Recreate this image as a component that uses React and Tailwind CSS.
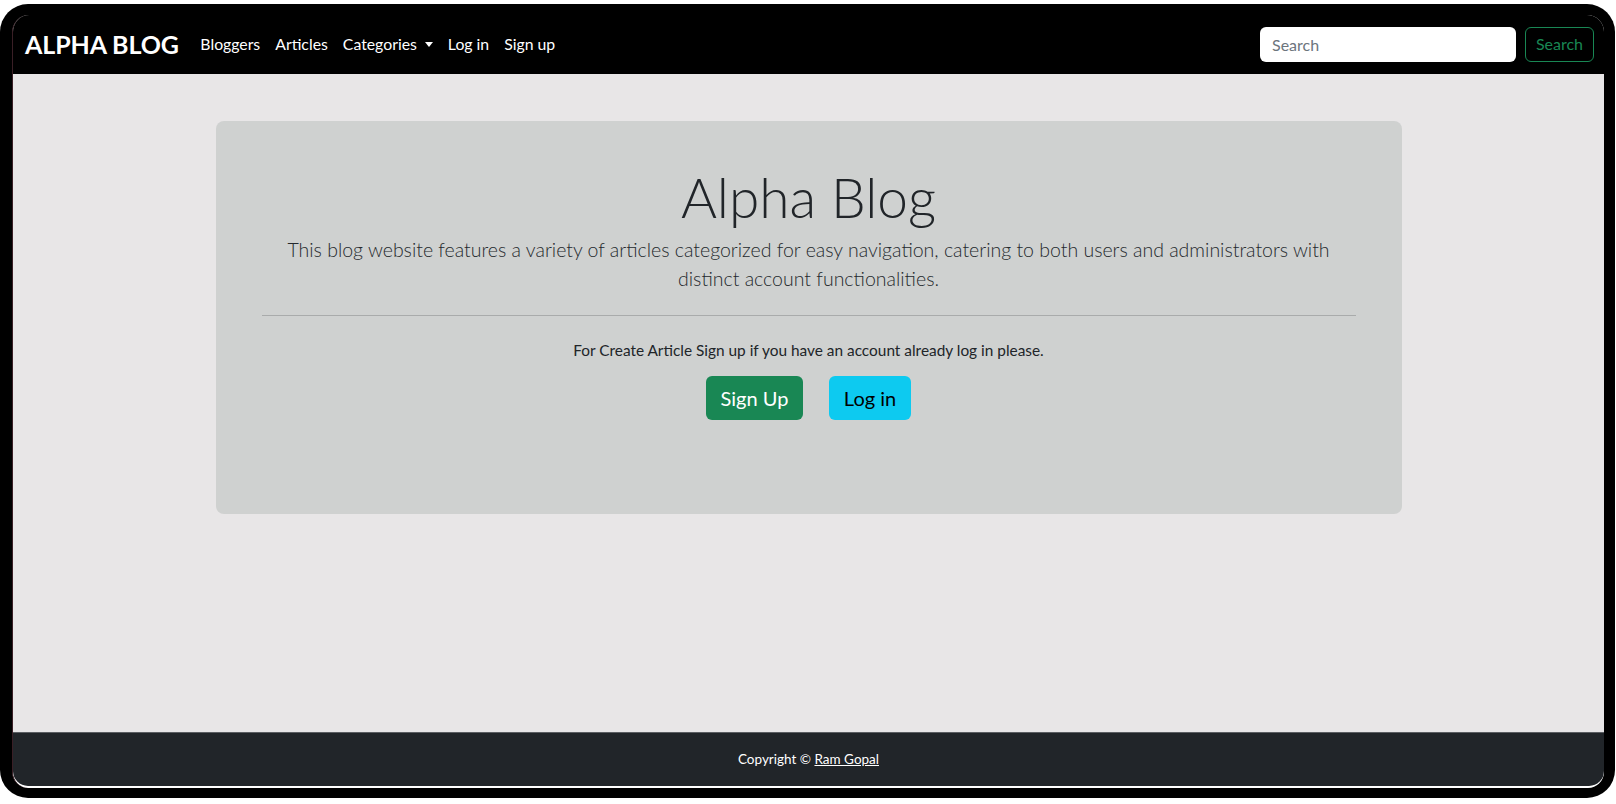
export default function App() {
  const font = { fontFamily: 'Lato, "Open Sans", sans-serif' };
  return (
    <div className="w-[1616px] h-[804px] bg-white overflow-hidden" style={font}>
      <div className="mt-[4px] w-[1615px] h-[794px] bg-black rounded-[28px] pl-[12px] pr-[11px] pt-[11px] pb-[10px] flex">
        <div className="flex-1 flex flex-col rounded-t-[17px] rounded-b-[16px] bg-white pb-[2px] border-l border-[#3a1f26] overflow-hidden">
          {/* navbar */}
          <nav className="h-[59px] bg-black flex items-center pl-[12px] pr-[10px] shrink-0 pb-[1px]">
            <a className="text-white font-bold text-[25px] leading-none mr-[14px] tracking-[-0.1px]">ALPHA BLOG</a>
            <ul className="flex items-center text-white text-[15.8px]">
              <li className="px-[7.5px]">Bloggers</li>
              <li className="px-[7.5px]">Articles</li>
              <li className="px-[7.5px] flex items-center">
                Categories
                <span className="ml-[8px] inline-block w-0 h-0 border-l-[4px] border-r-[4px] border-t-[5px] border-l-transparent border-r-transparent border-t-white"></span>
              </li>
              <li className="px-[7.5px]">Log in</li>
              <li className="px-[7.5px]">Sign up</li>
            </ul>
            <div className="ml-auto flex items-center gap-[9px]">
              <input
                placeholder="Search"
                className="w-[256px] h-[35px] bg-white rounded-[6px] px-[12px] text-[16px] text-[#212529] placeholder-[#6c757d] outline-none"
                style={font}
              />
              <button className="w-[69px] h-[35px] border border-[#198754] rounded-[6px] text-[#198754] text-[16px]" style={font}>
                Search
              </button>
            </div>
          </nav>
          {/* main */}
          <main className="flex-1 bg-[#e8e6e7] pt-[47px]">
            <div className="mx-auto w-[1186px] h-[393px] bg-[#cfd1d0] rounded-[8px] px-[46px] pt-[43px] text-center">
              <h1 className="text-[55px] font-light leading-[1.2] text-[#212529]">Alpha Blog</h1>
              <p className="mt-[5px] text-[19.5px] font-light leading-[29px] text-[#25292d] px-[2px]">
                This blog website features a variety of articles categorized for easy navigation, catering to both users and administrators with distinct account functionalities.
              </p>
              <hr className="mt-[22px] border-0 h-px bg-[#a9abab]" />
              <p className="mt-[22px] text-[15.4px] leading-[24px] text-[#212529]">
                For Create Article Sign up if you have an account already log in please.
              </p>
              <div className="mt-[14px] flex justify-center gap-[26px]">
                <button className="h-[44px] w-[97px] bg-[#198754] text-white text-[20px] rounded-[6px]" style={font}>Sign Up</button>
                <button className="h-[44px] w-[82px] bg-[#0dcaf0] text-black text-[20px] rounded-[6px]" style={font}>Log in</button>
              </div>
            </div>
          </main>
          {/* footer */}
          <footer className="h-[54px] bg-[#212529] border-t border-[#5b5e62] rounded-b-[15px] flex items-center justify-center text-[13.5px] text-white shrink-0">
            <span>
              Copyright © <a className="underline">Ram Gopal</a>
            </span>
          </footer>
        </div>
      </div>
    </div>
  );
}
